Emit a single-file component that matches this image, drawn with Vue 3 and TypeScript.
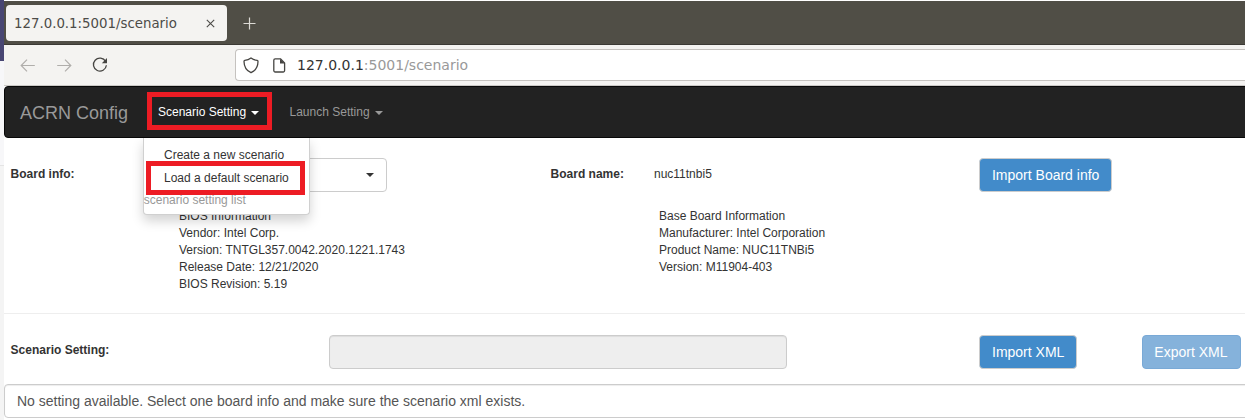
<script setup lang="ts">
interface NavItem { label: string; active: boolean }

const address = { host: '127.0.0.1', path: ':5001/scenario' }
const navItems: NavItem[] = [
  { label: 'Scenario Setting', active: true },
  { label: 'Launch Setting', active: false },
]
const biosInfo: string[] = [
  'BIOS Information',
  'Vendor: Intel Corp.',
  'Version: TNTGL357.0042.2020.1221.1743',
  'Release Date: 12/21/2020',
  'BIOS Revision: 5.19',
]
const boardInfo: string[] = [
  'Base Board Information',
  'Manufacturer: Intel Corporation',
  'Product Name: NUC11TNBi5',
  'Version: M11904-403',
]
</script>

<template>
  <div class="screen">
    <aside class="edge">
      <div class="edge-top"></div>
      <div class="edge-mid"></div>
    </aside>
    <div class="browser">
      <div class="tabs">
        <div class="tab">
          <span class="title">{{ address.host }}{{ address.path }}</span>
          <svg class="close" width="9" height="9" viewBox="0 0 9 9"><path d="M.8.8l7.4 7.4M8.2.8L.8 8.2" /></svg>
        </div>
        <svg class="plus" width="13" height="13" viewBox="0 0 13 13"><path d="M6.5.5v12M.5 6.5h12" /></svg>
      </div>
      <div class="toolbar">
        <svg class="arrow back" width="16" height="14" viewBox="0 0 16 14"><path d="M14.8 7.5H1.2M7 1.7L1.2 7.5L7 13.3" /></svg>
        <svg class="arrow forward" width="16" height="14" viewBox="0 0 16 14"><path d="M1.2 7.5h13.6M9 1.7L14.8 7.5L9 13.3" /></svg>
        <svg class="reload" width="16" height="16" viewBox="0 0 16 16">
          <path class="line" d="M13.6 4.4A6.5 6.5 0 1 0 14.4 8.3" />
          <path class="fill" d="M15 1v4.7a.5.5 0 0 1-.5.5H9.8z" />
        </svg>
        <div class="url">
          <svg class="shield" width="16" height="17" viewBox="0 0 16 17"><path d="M8 1C6.2 2.4 3.8 3.2 1.8 3.4C1.2 3.5 1 3.9 1 4.5C1.1 10.2 3.6 13.8 8 15.7C12.4 13.8 14.9 10.2 15 4.5C15 3.9 14.8 3.5 14.2 3.4C12.2 3.2 9.8 2.4 8 1z" /></svg>
          <svg class="page" width="13" height="15" viewBox="0 0 13 15">
            <path class="line" d="M7.6 .8H2.2A1.4 1.4 0 0 0 .8 2.2v10.4a1.4 1.4 0 0 0 1.4 1.4h8a1.4 1.4 0 0 0 1.4-1.4V5z" />
            <path class="fill" d="M7 .8v4.6h4.9z" />
          </svg>
          <span class="host">{{ address.host }}</span><span class="path">{{ address.path }}</span>
        </div>
      </div>

      <nav class="navbar">
        <span class="brand">ACRN Config</span>
        <span v-for="item in navItems" :key="item.label" class="nav-item" :class="{ active: item.active }">
          {{ item.label }}<i class="caret"></i>
        </span>
        <div class="menu">
          <div class="menu-item">Create a new scenario</div>
          <div class="menu-item marked">Load a default scenario</div>
          <div class="menu-note">scenario setting list</div>
        </div>
      </nav>

      <section class="board">
        <b class="label">Board info:</b>
        <div class="select"><i class="caret"></i></div>
        <b class="name-label">Board name:</b>
        <span class="name">nuc11tnbi5</span>
        <button class="btn">Import Board info</button>
      </section>
      <section class="details">
        <div class="bios"><div v-for="line in biosInfo" :key="line">{{ line }}</div></div>
        <div class="base"><div v-for="line in boardInfo" :key="line">{{ line }}</div></div>
      </section>
      <section class="scenario">
        <b class="label">Scenario Setting:</b>
        <div class="field"></div>
        <button class="btn import-xml">Import XML</button>
        <button class="btn disabled" disabled>Export XML</button>
      </section>
      <div class="message">No setting available. Select one board info and make sure the scenario xml exists.</div>
    </div>
  </div>
</template>

<style>
body { margin: 0; background: #fff; overflow: hidden; }
</style>

<style scoped>
.screen, .screen * { box-sizing: border-box; }
.screen { display: flex; width: 1245px; height: 420px; overflow: hidden; font: 12px/17px "Liberation Sans", Arial, sans-serif; color: #333; white-space: nowrap; }
svg { display: block; flex: none; fill: none; }
.edge { flex: none; width: 4px; background: #f4f4f4; }
.edge-top { height: 61px; background: #484673; }
.edge-mid { height: 105px; background: #f7f7f9; border-bottom: 1px solid #e4e4e4; }
.browser { flex: 1; min-width: 0; padding-top: 1px; background: #fff; }

.tabs { display: flex; height: 44px; padding: 4px 0 0 2px; background: #504e46; border-bottom: 1px solid #3b3934; }
.tab { display: flex; align-items: center; justify-content: space-between; width: 221px; height: 36px; padding: 0 12px 0 8px; border-radius: 4px; background: #f4f3f1; color: #4c4b48; font: 13.33px/18px "DejaVu Sans", sans-serif; }
.title { padding-top: 2px; }
.close { stroke: #4c4b48; stroke-width: 1.1; }
.plus { margin: 12px 0 0 16px; stroke: #dcdad5; stroke-width: 1.2; }

.toolbar { display: flex; align-items: center; height: 41px; padding-left: 16px; background: #f4f3f1; border-bottom: 1px solid #cbc9c6; }
.arrow { stroke: #b0aeab; stroke-width: 1.2; }
.forward { margin-left: 20px; }
.reload { margin-left: 20px; }
.reload .line, .page .line { stroke: #464542; stroke-width: 1.3; }
.fill { fill: #464542; }
.url { display: flex; align-items: center; flex: 1; height: 32px; margin-left: 127px; padding-left: 7px; border: 1px solid #c5c2bf; border-right: 0; border-radius: 4px 0 0 4px; background: #fff; font: 14px/18px "DejaVu Sans", sans-serif; }
.shield { stroke: #464542; stroke-width: 1.3; }
.page { margin: 0 11px 0 14px; }
.host { color: #333; }
.path { color: #999; }

.navbar { position: relative; display: flex; align-items: center; height: 52px; margin-right: -8px; padding-left: 15px; background: #222; border: 1px solid #080808; border-radius: 4px; color: #999; }
.brand { width: 108px; margin-right: 19px; padding-top: 2px; font-size: 18px; line-height: 20px; }
.nav-item { display: flex; align-items: center; height: 38px; margin: 0 9.5px 2px 0; padding: 3px 8px 0; }
.nav-item.active { width: 125px; padding: 3px 0 0 6px; border: 5px solid #ed1c24; color: #fff; }
.caret { display: inline-block; width: 0; height: 0; margin: 1px 0 0 5px; border-top: 4px solid currentColor; border-left: 4px solid transparent; border-right: 4px solid transparent; }
.menu { position: absolute; z-index: 2; top: 51px; left: 138px; width: 167px; height: 77px; padding-top: 9px; background: #fff; border: 1px solid #d0d0d0; border-top: 0; border-radius: 0 0 4px 4px; box-shadow: 0 6px 12px rgba(0, 0, 0, .175); color: #333; clip-path: inset(0 -20px -24px -20px); }
.menu-item { height: 14px; padding-left: 20px; }
.menu-item.marked { display: flex; align-items: center; width: 159px; height: 34px; margin-left: 2px; padding: 1px 0 0 13px; border: 5px solid #ed1c24; }
.menu-note { margin: -3px 0 0 -.3px; color: #999; }

.board { display: flex; align-items: flex-start; height: 70px; padding: 20px 0 0 7px; }
.board b, .board .name { line-height: 32px; }
.label { width: 160px; margin: 0 .4px 0 -.4px; }
.select { display: flex; align-items: center; justify-content: flex-end; width: 212px; height: 34px; margin-left: 4px; padding-right: 12px; border: 1px solid #ccc; border-radius: 4px; }
.select .caret { margin: 0; }
.name-label { width: 103.4px; margin-left: 163.6px; }
.name { width: 325px; }
.btn { height: 34px; margin: 0; padding: 0 12px; border: 1px solid #ccc; border-radius: 4px; background: #428bca; color: #fff; font: 14px/20px "Liberation Sans", Arial, sans-serif; }
.details { display: flex; height: 106px; padding-left: 175px; border-bottom: 1px solid #eee; }
.bios { width: 480px; }
.scenario { display: flex; align-items: flex-start; height: 70px; padding: 21px 0 0 7px; }
.scenario .label { width: 318px; line-height: 30px; }
.field { width: 458px; height: 34px; border: 1px solid #ccc; border-radius: 4px; background: #eee; box-shadow: inset 0 1px 1px rgba(0, 0, 0, .075); }
.import-xml { margin: 0 65px 0 192px; }
.disabled { width: 99px; padding: 0 12px 0 11px; text-align: left; background: #85b2db; border-color: #79a9d6; }
.message { height: 34px; margin-right: -8px; padding: 6px 12px; border: 1px solid #ccc; border-radius: 4px; color: #555; font-size: 14px; line-height: 20px; box-shadow: inset 0 1px 1px rgba(0, 0, 0, .075); }
</style>
